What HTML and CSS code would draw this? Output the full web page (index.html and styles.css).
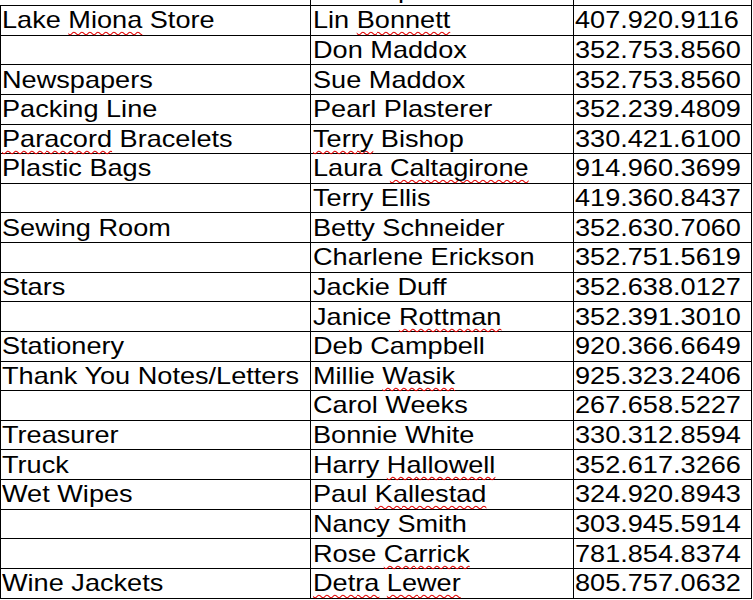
FILE: index.html
```html
<!DOCTYPE html>
<html>
<head>
<meta charset="utf-8">
<link rel="stylesheet" href="styles.css">
</head>
<body>
<div class="head">
  <div class="hcell"></div>
  <div class="hcell hp"><span class="t hp-t">p</span></div>
  <div class="hcell"></div>
</div>
<div class="sheet">
  <div class="c c1"><span class="t">Lake <span class="sp">Miona</span> Store</span></div>
  <div class="c c2"><span class="t">Lin <span class="sp">Bonnett</span></span></div>
  <div class="c c3"><span class="t">407.920.9116</span></div>

  <div class="c c1"></div>
  <div class="c c2"><span class="t">Don Maddox</span></div>
  <div class="c c3"><span class="t">352.753.8560</span></div>

  <div class="c c1"><span class="t">Newspapers</span></div>
  <div class="c c2"><span class="t">Sue Maddox</span></div>
  <div class="c c3"><span class="t">352.753.8560</span></div>

  <div class="c c1"><span class="t">Packing Line</span></div>
  <div class="c c2"><span class="t">Pearl Plasterer</span></div>
  <div class="c c3"><span class="t">352.239.4809</span></div>

  <div class="c c1"><span class="t"><span class="sp">Paracord</span> Bracelets</span></div>
  <div class="c c2"><span class="t"><span class="sp">Terry</span> Bishop</span></div>
  <div class="c c3"><span class="t">330.421.6100</span></div>

  <div class="c c1"><span class="t">Plastic Bags</span></div>
  <div class="c c2"><span class="t">Laura <span class="sp">Caltagirone</span></span></div>
  <div class="c c3"><span class="t">914.960.3699</span></div>

  <div class="c c1"></div>
  <div class="c c2"><span class="t">Terry Ellis</span></div>
  <div class="c c3"><span class="t">419.360.8437</span></div>

  <div class="c c1"><span class="t">Sewing Room</span></div>
  <div class="c c2"><span class="t">Betty Schneider</span></div>
  <div class="c c3"><span class="t">352.630.7060</span></div>

  <div class="c c1"></div>
  <div class="c c2"><span class="t">Charlene Erickson</span></div>
  <div class="c c3"><span class="t">352.751.5619</span></div>

  <div class="c c1"><span class="t">Stars</span></div>
  <div class="c c2"><span class="t">Jackie Duff</span></div>
  <div class="c c3"><span class="t">352.638.0127</span></div>

  <div class="c c1"></div>
  <div class="c c2"><span class="t">Janice <span class="sp">Rottman</span></span></div>
  <div class="c c3"><span class="t">352.391.3010</span></div>

  <div class="c c1"><span class="t">Stationery</span></div>
  <div class="c c2"><span class="t">Deb Campbell</span></div>
  <div class="c c3"><span class="t">920.366.6649</span></div>

  <div class="c c1"><span class="t">Thank You Notes/Letters</span></div>
  <div class="c c2"><span class="t">Millie <span class="sp">Wasik</span></span></div>
  <div class="c c3"><span class="t">925.323.2406</span></div>

  <div class="c c1"></div>
  <div class="c c2"><span class="t">Carol Weeks</span></div>
  <div class="c c3"><span class="t">267.658.5227</span></div>

  <div class="c c1"><span class="t">Treasurer</span></div>
  <div class="c c2"><span class="t">Bonnie White</span></div>
  <div class="c c3"><span class="t">330.312.8594</span></div>

  <div class="c c1"><span class="t">Truck</span></div>
  <div class="c c2"><span class="t">Harry <span class="sp">Hallowell</span></span></div>
  <div class="c c3"><span class="t">352.617.3266</span></div>

  <div class="c c1"><span class="t">Wet Wipes</span></div>
  <div class="c c2"><span class="t">Paul <span class="sp">Kallestad</span></span></div>
  <div class="c c3"><span class="t">324.920.8943</span></div>

  <div class="c c1"></div>
  <div class="c c2"><span class="t">Nancy Smith</span></div>
  <div class="c c3"><span class="t">303.945.5914</span></div>

  <div class="c c1"></div>
  <div class="c c2"><span class="t">Rose <span class="sp">Carrick</span></span></div>
  <div class="c c3"><span class="t">781.854.8374</span></div>

  <div class="c c1"><span class="t">Wine Jackets</span></div>
  <div class="c c2"><span class="t"><span class="sp">Detra</span> <span class="sp">Lewer</span></span></div>
  <div class="c c3"><span class="t">805.757.0632</span></div>
</div>
</body>
</html>
```
FILE: styles.css
```css
html, body {
  margin: 0;
  padding: 0;
  background: #fff;
  overflow: hidden;
}
body {
  width: 753px;
  height: 600px;
  font-family: "Liberation Sans", Arial, sans-serif;
  font-size: 24px;
  color: #000;
}
.head {
  display: grid;
  grid-template-columns: 310px 263px 178px;
  height: 5px;
  padding-left: 1px;
}
.hcell {
  border-right: 1px solid #000;
  overflow: hidden;
  height: 5px;
  display: flex;
  align-items: flex-start;
}
.hp {
  padding-left: 87px;
}
.hp-t {
  margin-top: -22px;
  line-height: 24px;
}
.sheet {
  display: grid;
  grid-template-columns: 310px 263px 178px;
  grid-auto-rows: 29.63px;
  border-top: 1px solid #000;
  border-left: 1px solid #000;
  width: 751px;
}
.c {
  border-right: 1px solid #000;
  border-bottom: 1px solid #000;
  display: flex;
  align-items: center;
  line-height: 24px;
  white-space: nowrap;
  overflow: visible;
}
.c1 { padding-left: 1px; }
.c2 { padding-left: 2px; }
.c3 { padding-left: 1px; }
.t {
  display: inline-block;
  transform: scaleX(1.13);
  transform-origin: left center;
}
.sp {
  text-decoration: underline wavy #e00000;
  text-decoration-thickness: 1px;
  text-underline-offset: 3px;
  text-decoration-skip-ink: none;
}
```
